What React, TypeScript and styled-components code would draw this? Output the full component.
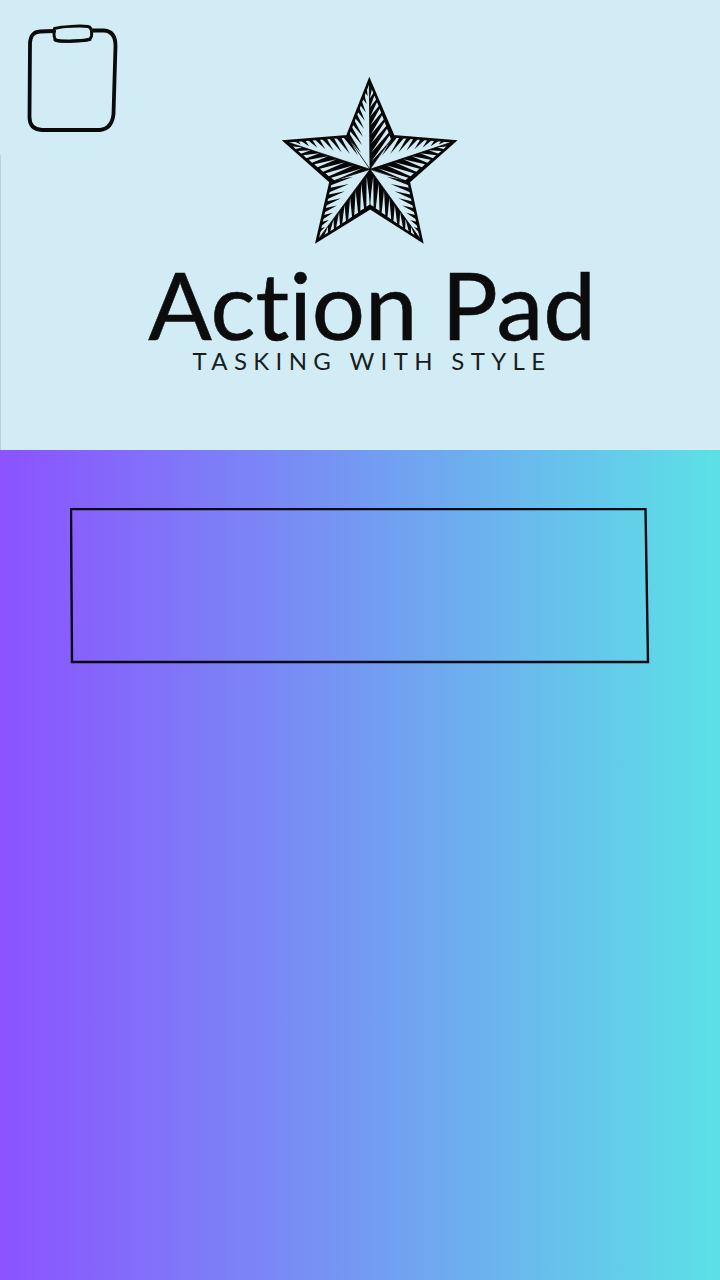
import styled, { createGlobalStyle } from "styled-components";

type Pt = [number, number];

const GlobalStyle = createGlobalStyle`
    html, body {
        margin: 0;
        padding: 0;
    }
`;

const Page = styled.div`
    display: flex;
    flex-direction: column;
    width: 720px;
    height: 1280px;
    overflow: hidden;
    font-family: "Lato", "Liberation Sans", sans-serif;
`;

const Header = styled.header`
    position: relative;
    display: flex;
    gap: 32px;
    box-sizing: border-box;
    height: 450px;
    padding: 24px 0 0 27px;
    background-color: #d2ecf6;

    &::before {
        content: "";
        position: absolute;
        left: 0;
        top: 155px;
        bottom: 0;
        width: 1px;
        background-color: #b9d2db;
    }
`;

const ClipButton = styled.button`
    flex: none;
    width: 92px;
    height: 110px;
    padding: 0;
    border: none;
    background: none;

    svg {
        display: block;
    }
`;

const Logo = styled.div`
    display: flex;
    flex-direction: column;
    align-items: center;
    width: 442px;
    padding-top: 46px;
`;

const StarMark = styled.svg`
    display: block;
    width: 200px;
    height: 185px;
    margin-left: -2px;
`;

const Title = styled.h1`
    margin: 9px 0 4px;
    font-size: 94px;
    font-weight: 400;
    line-height: 80px;
    font-variant-ligatures: none;
    white-space: nowrap;
    color: #0c0c0c;
    -webkit-text-stroke: 0.6px #0c0c0c;
`;

const Tagline = styled.p`
    margin: 0;
    font-size: 24px;
    line-height: 26px;
    letter-spacing: 6.35px;
    white-space: nowrap;
    color: #1a1d20;
`;

const Body = styled.main`
    flex: 1;
    padding: 58px 0 0 70px;
    background: linear-gradient(90deg, #8c52ff, #5ce1e6);
`;

const TaskFrame = styled.div`
    width: 580px;
    height: 156px;

    svg {
        display: block;
    }
`;

const lerp = (a: Pt, b: Pt, t: number): Pt => [a[0] + (b[0] - a[0]) * t, a[1] + (b[1] - a[1]) * t];
const pts = (list: Pt[]) => list.map((p) => `${p[0].toFixed(1)},${p[1].toFixed(1)}`).join(" ");

const CENTER: Pt = [297, 298];
const TIPS: Pt[] = [[295, 31], [550, 214], [452, 513], [138, 513], [42, 214]];
const INNERS: Pt[] = [[367, 199], [413, 335], [297, 414], [179, 335], [229, 199]];
const LIGHT = "#d2ecf6";

// one half of a star point: tip, inner corner, and whether it is the shaded side
const facets: { tip: Pt; inner: Pt; dark: boolean }[] = [
    { tip: TIPS[0], inner: INNERS[4], dark: false },
    { tip: TIPS[0], inner: INNERS[0], dark: true },
    { tip: TIPS[1], inner: INNERS[0], dark: false },
    { tip: TIPS[1], inner: INNERS[1], dark: true },
    { tip: TIPS[2], inner: INNERS[1], dark: false },
    { tip: TIPS[2], inner: INNERS[2], dark: true },
    { tip: TIPS[3], inner: INNERS[2], dark: true },
    { tip: TIPS[3], inner: INNERS[3], dark: false },
    { tip: TIPS[4], inner: INNERS[3], dark: true },
    { tip: TIPS[4], inner: INNERS[4], dark: false },
];

function Facet({ tip, inner, dark }: { tip: Pt; inner: Pt; dark: boolean }) {
    const hatch = Array.from({ length: 8 }, (_, i) => {
        const t = 0.03 + i * 0.115;
        const gap = 0.04;
        const a = lerp(inner, tip, t - gap);
        const b = lerp(inner, tip, t + gap);
        const spine = lerp(CENTER, tip, 0.04 + 0.9 * t);
        return { a, b, spine };
    });

    return (
        <g>
            <polygon points={pts([CENTER, tip, inner])} fill={dark ? "#060606" : LIGHT} />
            {hatch.map(({ a, b, spine }, i) =>
                dark ? (
                    <polygon
                        key={i}
                        points={pts([lerp(a, spine, 0.1), lerp(b, spine, 0.1), lerp(a, spine, 0.94)])}
                        fill={LIGHT}
                    />
                ) : (
                    <polygon key={i} points={pts([a, b, lerp(a, spine, 0.62)])} fill="#060606" />
                ),
            )}
        </g>
    );
}

function Star() {
    const outline: Pt[] = TIPS.flatMap((tip, i) => [tip, INNERS[i]]);
    return (
        <StarMark viewBox="0 0 600 555">
            {facets.map((f, i) => (
                <Facet key={i} {...f} />
            ))}
            {INNERS.concat(TIPS).map((p, i) => (
                <line key={i} x1={CENTER[0]} y1={CENTER[1]} x2={p[0]} y2={p[1]} stroke="#060606" strokeWidth={2.5} />
            ))}
            <polygon points={pts(outline)} fill="none" stroke="#060606" strokeWidth={8} strokeLinejoin="miter" />
        </StarMark>
    );
}

function ClipboardIcon() {
    return (
        <svg width="92" height="110" viewBox="27 24 92 110" fill="none" stroke="#0a0a0a" strokeLinecap="round" strokeLinejoin="round">
            <path
                d="M54 31 L40 31.5 C33 32 30.5 36 30 43 L29.5 117 C29.5 125 33 129.5 42 130 L100 130 C108 129 112.5 124 113.5 114 L115.5 46 C115.5 36 112 31 104 30.5 L92 30.5"
                strokeWidth={3.8}
            />
            <path d="M54.5 28.5 C62 26.5 80 25.5 88 26.5 C91 27 92 31 91.5 36 C91 39 89 40 85 40.5 C76 41 66 41.5 58 41 C54.5 40.5 54 38 54 34 Z" strokeWidth={3} />
            <path d="M55 40 C65 42 80 41 90 39.5" strokeWidth={3} />
        </svg>
    );
}

function App() {
    return (
        <Page>
            <GlobalStyle />
            <Header>
                <ClipButton aria-label="clipboard">
                    <ClipboardIcon />
                </ClipButton>
                <Logo>
                    <Star />
                    <Title>Action Pad</Title>
                    <Tagline>TASKING WITH STYLE</Tagline>
                </Logo>
            </Header>
            <Body>
                <TaskFrame>
                    <svg width="580" height="156" viewBox="70 508 580 156" fill="none">
                        <polygon points="71,509 645.5,509 648,662 72,662" stroke="#0a0a14" strokeWidth={2.4} />
                    </svg>
                </TaskFrame>
            </Body>
        </Page>
    );
}

export default App;
